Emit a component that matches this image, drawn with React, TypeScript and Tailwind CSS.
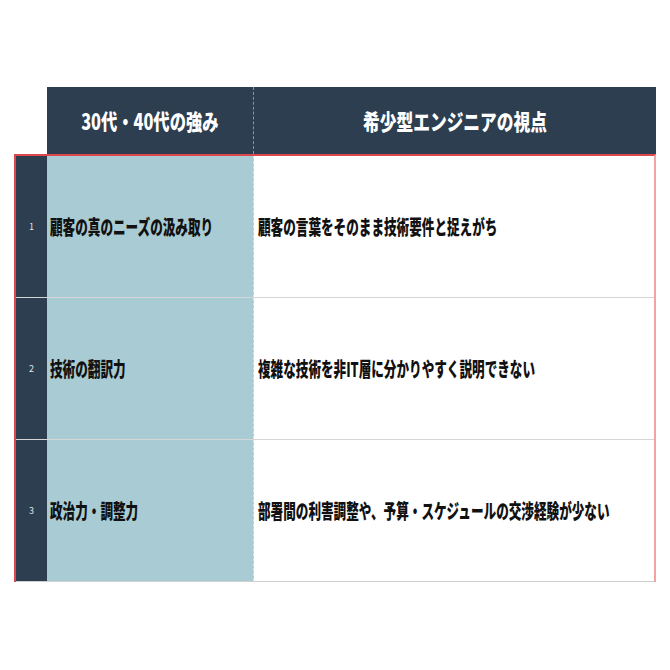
const rows = [
  { n: '1', left: '顧客の真のニーズの汲み取り', right: '顧客の言葉をそのまま技術要件と捉えがち' },
  { n: '2', left: '技術の翻訳力', right: '複雑な技術を非IT層に分かりやすく説明できない' },
  { n: '3', left: '政治力・調整力', right: '部署間の利害調整や、予算・スケジュールの交渉経験が少ない' },
]

const font = { fontFamily: '"Noto Sans CJK JP", "Noto Sans", sans-serif' }

export default function App() {
  return (
    <div className="w-[670px] h-[670px] bg-white pt-[87px]" style={font}>
      <div className="ml-[47px] w-[609px] h-[67px] flex bg-[#2c3e50] text-white">
        <div className="w-[207px] shrink-0 flex items-center justify-center border-r border-dashed border-[#8a96a3]">
          <span className="inline-block text-[22px] font-black scale-x-[0.74] whitespace-nowrap">30代・40代の強み</span>
        </div>
        <div className="flex-1 flex items-center justify-center">
          <span className="inline-block text-[22px] font-black scale-x-[0.76] whitespace-nowrap">希少型エンジニアの視点</span>
        </div>
      </div>
      <div className="ml-[14px] w-[642px] border-t-2 border-[#e0474c] border-l-2 border-l-[#e0474c] border-r-2 border-r-[#f4a3a3]">
        {rows.map((r, i) => (
          <div key={r.n} className={`flex h-[142px] ${i < rows.length - 1 ? 'border-b border-[#d6d6d6]' : 'border-b border-[#cfcfcf]'}`}>
            <div className="w-[31px] shrink-0 bg-[#2c3e50] flex items-center justify-center text-[9px] text-[#dfe4ea]">{r.n}</div>
            <div className="w-[207px] shrink-0 bg-[#a9cbd3] border-r border-dashed border-[#d8e4e7] flex items-center pl-[3px]">
              <span className="inline-block origin-left text-[20px] font-black text-[#111] scale-x-[0.63] whitespace-nowrap">{r.left}</span>
            </div>
            <div className="flex-1 min-w-0 flex items-center pl-[4px]">
              <span className="inline-block origin-left text-[20px] font-black text-[#111] scale-x-[0.63] whitespace-nowrap">{r.right}</span>
            </div>
          </div>
        ))}
      </div>
    </div>
  )
}
